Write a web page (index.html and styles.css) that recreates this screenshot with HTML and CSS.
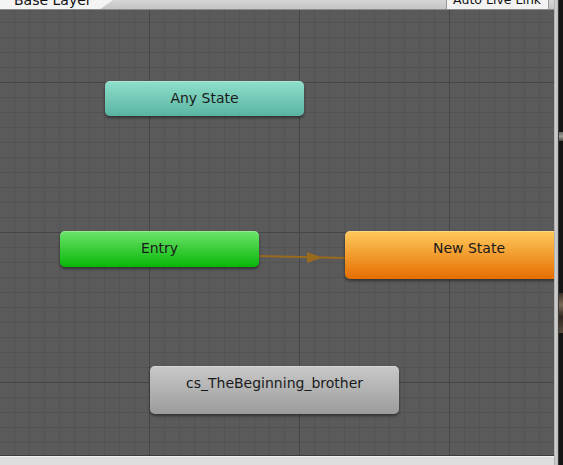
FILE: index.html
```html
<!doctype html>
<html>
<head>
  <meta charset="utf-8">
  <title>Animator</title>
  <link rel="stylesheet" href="styles.css">
</head>
<body>
  <div class="window">
    <div class="main">
      <div class="toolbar">
        <div class="tab"><span>Base Layer</span></div>
        <div class="toolbar-fill"></div>
        <div class="live-link"><span>Auto Live Link</span></div>
      </div>

      <div class="graph">
        <svg class="transitions" width="554" height="446">
          <line x1="259" y1="246" x2="345" y2="248" stroke="#9a6a1c" stroke-width="2"/>
          <polygon points="307,242 322,247.5 307,253" fill="#9a6a1c"/>
        </svg>
        <div class="node any-state">Any State</div>
        <div class="node entry">Entry</div>
        <div class="node new-state">New State</div>
        <div class="node clip">cs_TheBeginning_brother</div>
      </div>

      <div class="statusbar"></div>
    </div>

    <div class="side">
      <div class="side-edge"></div>
      <div class="side-dark">
        <div class="speck speck-top"></div>
        <div class="speck speck-mid"></div>
      </div>
    </div>
  </div>
</body>
</html>
```

FILE: styles.css
```css
html, body {
  margin: 0;
  padding: 0;
  background: #c8c8c8;
}
body {
  font-family: "DejaVu Sans", sans-serif;
}
.window {
  display: flex;
  width: 563px;
  height: 465px;
  overflow: hidden;
}
.main {
  display: flex;
  flex-direction: column;
  width: 554px;
}

/* toolbar */
.toolbar {
  display: flex;
  height: 10px;
  box-sizing: border-box;
  border-bottom: 1px solid #8c8c8c;
  background: linear-gradient(#d6d6d6, #c4c4c4);
  overflow: hidden;
}
.tab {
  width: 113px;
  background: #f4f4f4;
  clip-path: polygon(0 0, 100% 0, 89% 100%, 0 100%);
  font-size: 14px;
  line-height: 16px;
  color: #111;
}
.tab span {
  display: block;
  margin: -8px 0 0 14px;
  white-space: nowrap;
}
.toolbar-fill {
  flex: 1;
}
.live-link {
  width: 103px;
  margin-right: 5px;
  box-sizing: border-box;
  border-left: 1px solid #9a9a9a;
  border-right: 1px solid #9a9a9a;
  background: #f2f2f2;
  font-size: 12.5px;
  line-height: 16px;
  color: #111;
}
.live-link span {
  display: block;
  margin: -8px 0 0 6px;
  white-space: nowrap;
}

/* graph canvas */
.graph {
  position: relative;
  flex: 1;
  overflow: hidden;
  background-color: #5a5a5a;
  background-image:
    linear-gradient(to right, #464646 1px, transparent 1px),
    linear-gradient(to bottom, #464646 1px, transparent 1px),
    linear-gradient(to right, #535353 1px, transparent 1px),
    linear-gradient(to bottom, #535353 1px, transparent 1px);
  background-size: 150px 150px, 150px 150px, 15px 15px, 15px 15px;
  background-position: 149px 0, 0 72px, 14px 0, 0 12px;
  border-bottom: 1px solid #3c3c3c;
}
.transitions {
  position: absolute;
  left: 0;
  top: 0;
}
.node {
  position: absolute;
  box-sizing: border-box;
  height: 36px;
  padding-top: 9px;
  border-radius: 5px;
  font-size: 14px;
  line-height: 16px;
  text-align: center;
  color: #1a1a1a;
  white-space: nowrap;
  box-shadow: inset 0 1px rgba(255, 255, 255, 0.25), 0 2px 3px rgba(0, 0, 0, 0.45);
}
.any-state {
  left: 105px;
  top: 71px;
  width: 199px;
  height: 35px;
  background: linear-gradient(#8ee0cb, #5ab4a2);
}
.entry {
  left: 60px;
  top: 221px;
  width: 199px;
  background: linear-gradient(#6de56b, #08b608);
}
.new-state {
  left: 345px;
  top: 221px;
  width: 248px;
  height: 48px;
  background: linear-gradient(#ffc95c, #e66e00);
}
.clip {
  left: 150px;
  top: 356px;
  width: 249px;
  height: 48px;
  background: linear-gradient(#c9c9c9, #9b9b9b);
}

.statusbar {
  height: 8px;
  background: #dedede;
  border-top: 1px solid #f2f2f2;
}

/* right edge of the window */
.side {
  display: flex;
  width: 9px;
}
.side-edge {
  width: 4px;
  background: linear-gradient(to right, #a4a4a4, #cfcfcf 40%, #b8b8b8);
}
.side-dark {
  position: relative;
  flex: 1;
  background: #141414;
  border-left: 1px solid #3a3a3a;
}
.speck {
  position: absolute;
  left: 0;
  right: 0;
}
.speck-top {
  top: 132px;
  height: 9px;
  background: linear-gradient(#6c6c66, #9a9a92, #4a4a46);
}
.speck-mid {
  top: 293px;
  height: 40px;
  background: linear-gradient(#3a3028, #7a6a58 30%, #2e2620 60%, #5a4c3e);
}
```
